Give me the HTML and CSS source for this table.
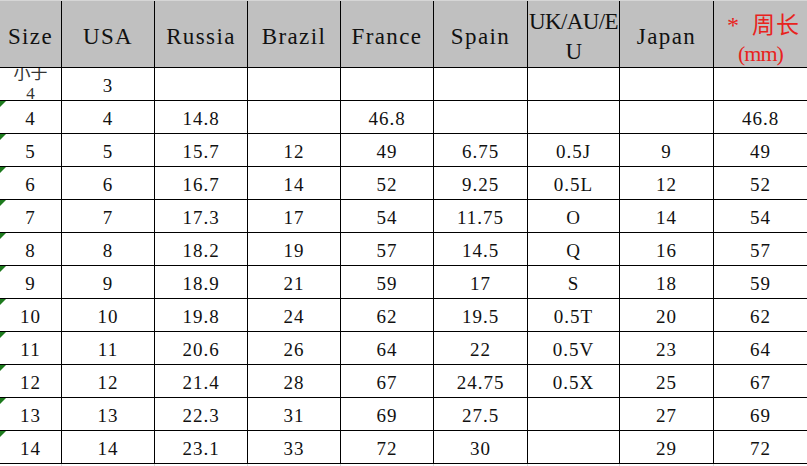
FILE: index.html
```html
<!DOCTYPE html>
<html lang="zh">
<head>
<meta charset="utf-8">
<title>Size chart</title>
<link rel="stylesheet" href="styles.css">
</head>
<body>
<div class="sheet">
  <div class="grid">
    <div class="c h">Size</div>
    <div class="c h">USA</div>
    <div class="c h">Russia</div>
    <div class="c h">Brazil</div>
    <div class="c h">France</div>
    <div class="c h">Spain</div>
    <div class="c h tight">UK/AU/E<br>U</div>
    <div class="c h">Japan</div>
    <div class="c h red"><span class="zh"><span class="star">*</span>周长</span><span class="mm">(mm)</span></div>

    <div class="c small">小于<br>4</div><div class="c">3</div><div class="c"></div><div class="c"></div><div class="c"></div><div class="c"></div><div class="c"></div><div class="c"></div><div class="c"></div>

    <div class="c mark">4</div><div class="c">4</div><div class="c">14.8</div><div class="c"></div><div class="c">46.8</div><div class="c"></div><div class="c"></div><div class="c"></div><div class="c">46.8</div>

    <div class="c mark">5</div><div class="c">5</div><div class="c">15.7</div><div class="c">12</div><div class="c">49</div><div class="c">6.75</div><div class="c">0.5J</div><div class="c">9</div><div class="c">49</div>

    <div class="c mark">6</div><div class="c">6</div><div class="c">16.7</div><div class="c">14</div><div class="c">52</div><div class="c">9.25</div><div class="c">0.5L</div><div class="c">12</div><div class="c">52</div>

    <div class="c mark">7</div><div class="c">7</div><div class="c">17.3</div><div class="c">17</div><div class="c">54</div><div class="c">11.75</div><div class="c">O</div><div class="c">14</div><div class="c">54</div>

    <div class="c mark">8</div><div class="c">8</div><div class="c">18.2</div><div class="c">19</div><div class="c">57</div><div class="c">14.5</div><div class="c">Q</div><div class="c">16</div><div class="c">57</div>

    <div class="c mark">9</div><div class="c">9</div><div class="c">18.9</div><div class="c">21</div><div class="c">59</div><div class="c">17</div><div class="c">S</div><div class="c">18</div><div class="c">59</div>

    <div class="c mark">10</div><div class="c">10</div><div class="c">19.8</div><div class="c">24</div><div class="c">62</div><div class="c">19.5</div><div class="c">0.5T</div><div class="c">20</div><div class="c">62</div>

    <div class="c mark">11</div><div class="c">11</div><div class="c">20.6</div><div class="c">26</div><div class="c">64</div><div class="c">22</div><div class="c">0.5V</div><div class="c">23</div><div class="c">64</div>

    <div class="c mark">12</div><div class="c">12</div><div class="c">21.4</div><div class="c">28</div><div class="c">67</div><div class="c">24.75</div><div class="c">0.5X</div><div class="c">25</div><div class="c">67</div>

    <div class="c mark">13</div><div class="c">13</div><div class="c">22.3</div><div class="c">31</div><div class="c">69</div><div class="c">27.5</div><div class="c"></div><div class="c">27</div><div class="c">69</div>

    <div class="c mark">14</div><div class="c">14</div><div class="c">23.1</div><div class="c">33</div><div class="c">72</div><div class="c">30</div><div class="c"></div><div class="c">29</div><div class="c">72</div>
  </div>
  <div class="foot">
    <div></div><div></div><div></div><div></div><div></div><div></div><div></div><div></div><div></div>
  </div>
</div>
</body>
</html>
```
FILE: styles.css
```css
html, body {
  margin: 0;
  padding: 0;
  background: #ffffff;
}

body {
  font-family: "Liberation Serif", "Noto Sans CJK SC", serif;
  color: #111;
  overflow: hidden;
}

.sheet {
  border-top: 1px solid #d6d6d6;
}

.grid,
.foot {
  display: grid;
  grid-template-columns: 62px 93px 93px 93px 93px 94px 92px 94px 94px;
}

.grid {
  grid-template-rows: 67px;
  grid-auto-rows: 33px;
}

.c {
  box-sizing: border-box;
  border-right: 1px solid #000;
  border-bottom: 1px solid #000;
  display: flex;
  align-items: center;
  justify-content: center;
  text-align: center;
  font-size: 19px;
  letter-spacing: 1px;
  line-height: 22px;
  padding-top: 4px;
  overflow: hidden;
  position: relative;
  white-space: nowrap;
}

.h {
  background: #c0c0c0;
  font-size: 23px;
  letter-spacing: 1.4px;
  line-height: 30px;
  padding-top: 6px;
}

.tight {
  letter-spacing: -0.6px;
}

.red {
  color: #e8231d;
  flex-direction: column;
  letter-spacing: 0;
  padding-top: 10px;
  line-height: 28px;
}

.red .zh {
  letter-spacing: 1px;
  padding-left: 6px;
}

.red .star {
  font-size: 24px;
  margin-right: 12px;
}

.red .mm {
  font-size: 22px;
  letter-spacing: -1px;
}

.small {
  font-size: 17px;
  letter-spacing: 0;
  line-height: 20px;
  color: #333;
  padding-top: 0;
}

.mark::before {
  content: "";
  position: absolute;
  left: 0;
  top: 0;
  border-top: 6px solid #1d7a1d;
  border-right: 6px solid transparent;
}

.foot {
  height: 3px;
}

.foot div {
  border-right: 1px solid #dadada;
}
```
